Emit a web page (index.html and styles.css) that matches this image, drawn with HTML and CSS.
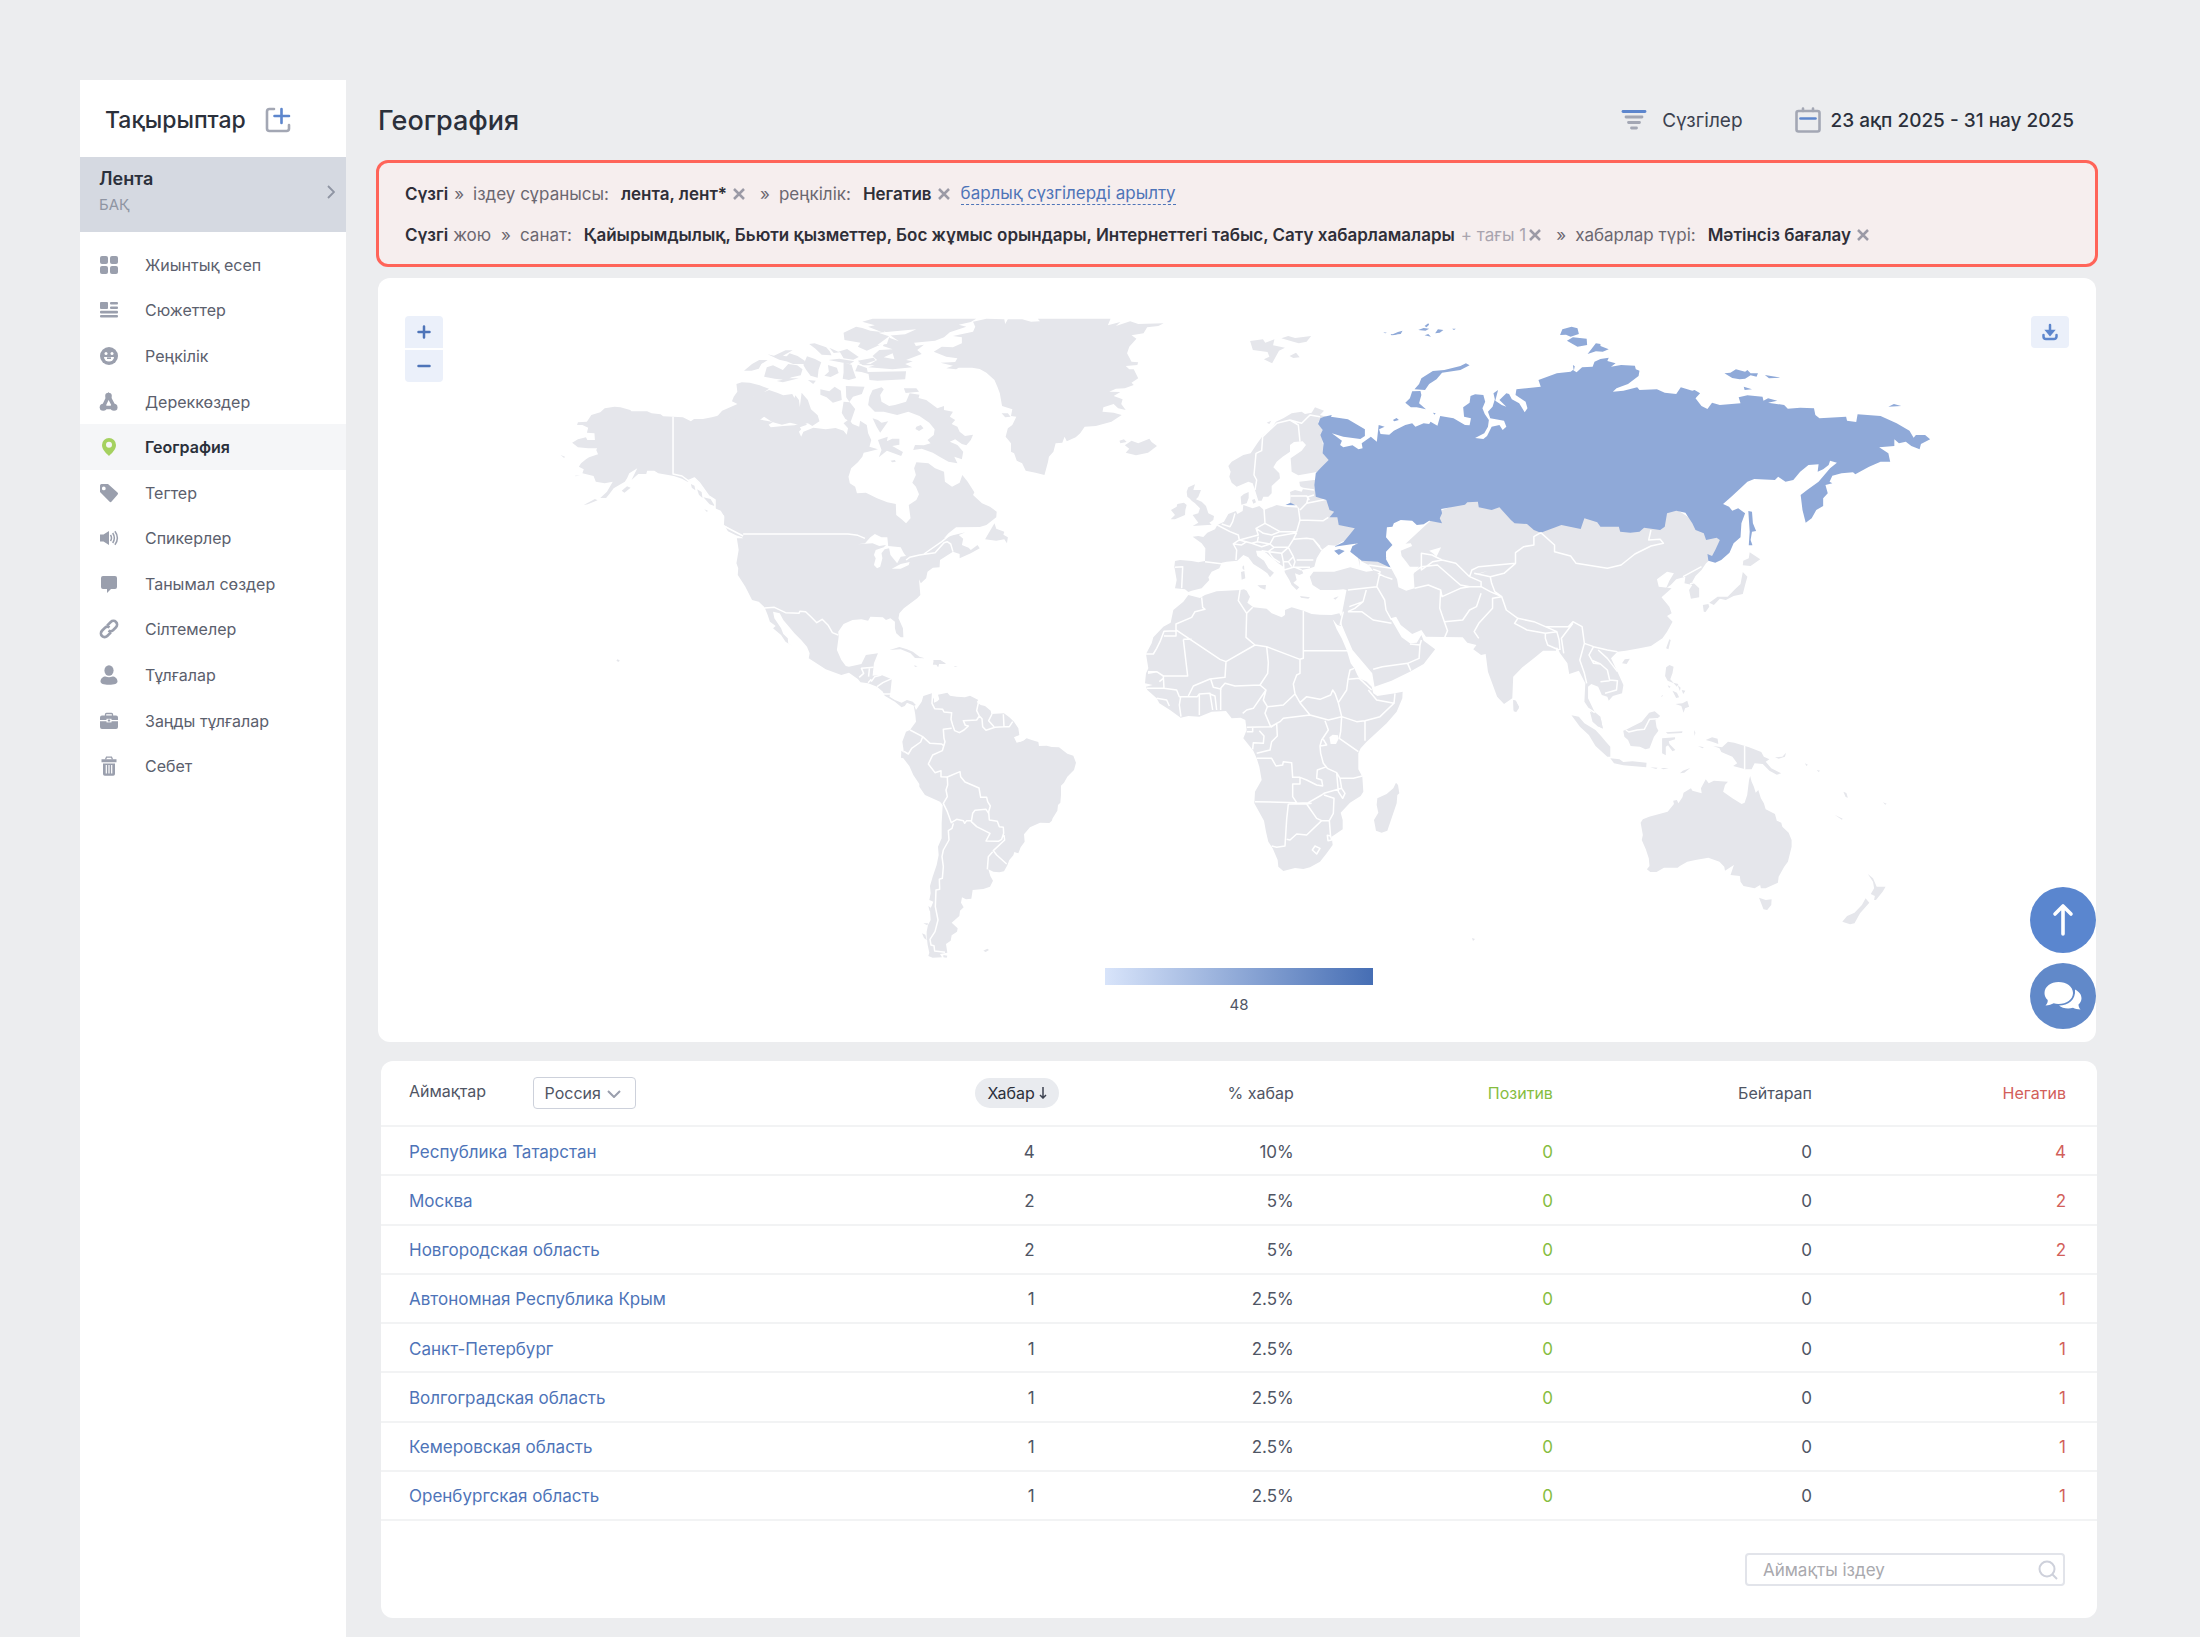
FILE: index.html
```html
<!DOCTYPE html>
<html lang="kk">
<head>
  <meta charset="UTF-8">
  <meta name="viewport" content="width=device-width, initial-scale=1.0">
  <title>География</title>
  <link rel="stylesheet" href="styles.css">
</head>
<body>

  <!-- Sidebar -->
  <aside class="sidebar">
    <div class="sidebar-head">
      <span>Тақырыптар</span>
      <button class="icon-btn" aria-label="Қосу">
        <svg width="26" height="26" viewBox="0 0 26 26" fill="none" stroke-width="2.6" stroke-linecap="round">
          <path stroke="#a3a7b4" d="M9 2H4.500a2.500 2.500 0 0 0-2.500 2.500v17a2.500 2.500 0 0 0 2.500 2.500h17a2.500 2.500 0 0 0 2.500-2.500V18"/>
          <path stroke="#5d86cd" d="M16.500 2v14M9.500 9h14.500"/>
        </svg>
      </button>
    </div>

    <a class="topic" href="#">
      <span>
        <strong>Лента</strong>
        <small>БАҚ</small>
      </span>
      <svg width="8" height="14" viewBox="0 0 8 14" fill="none" stroke="#8f95a3" stroke-width="1.8"><path d="M1 1l6 6-6 6"/></svg>
    </a>

    <nav class="menu">
      <a href="#"><svg viewBox="0 0 20 20"><rect x="1" y="1" width="8" height="8" rx="2"/><rect x="11" y="1" width="8" height="8" rx="2"/><rect x="1" y="11" width="8" height="8" rx="2"/><rect x="11" y="11" width="8" height="8" rx="2"/></svg>Жиынтық есеп</a>
      <a href="#"><svg viewBox="0 0 20 20"><rect x="1" y="2" width="8" height="7" rx="1"/><rect x="11" y="2" width="8" height="2.6" rx="1"/><rect x="11" y="6.4" width="8" height="2.6" rx="1"/><rect x="1" y="10.8" width="18" height="2.6" rx="1"/><rect x="1" y="15" width="18" height="2.6" rx="1"/></svg>Сюжеттер</a>
      <a href="#"><svg viewBox="0 0 20 20"><circle cx="10" cy="10" r="9"/><circle cx="7" cy="7.6" r="1.5" fill="#fff"/><circle cx="13" cy="7.6" r="1.5" fill="#fff"/><path fill="#fff" d="M5 11h10a5 4.6 0 0 1-10 0z"/><path d="M8 11.4h4v1.6H8z"/></svg>Реңкілік</a>
      <a href="#"><svg viewBox="0 0 20 20"><path stroke="#9a9fad" stroke-width="3.600" fill="none" d="M9.500 4L4 15.500h11.500z"/><circle cx="9.500" cy="4" r="3.300"/><circle cx="4.200" cy="15.300" r="3.500"/><circle cx="15" cy="15.300" r="3.500"/></svg>Дереккөздер</a>
      <a href="#" class="active"><svg viewBox="0 0 20 20"><path fill-rule="evenodd" d="M10 1a7 7 0 0 1 7 7c0 4.500-4 8-7 11-3-3-7-6.500-7-11a7 7 0 0 1 7-7zm0 3.800a3 3 0 1 0 0 6 3 3 0 0 0 0-6z"/></svg>География</a>
      <a href="#"><svg viewBox="0 0 20 20"><path fill-rule="evenodd" d="M2.500 1H9l9.500 8.500a1.500 1.500 0 0 1 0 2.200L12.600 18.600a1.500 1.500 0 0 1-2.200 0L1 9V2.500A1.500 1.500 0 0 1 2.500 1zm2.300 2.500a1.900 1.900 0 1 0 0 3.800 1.900 1.900 0 0 0 0-3.800z"/></svg>Тегтер</a>
      <a href="#"><svg viewBox="0 0 20 20"><path d="M1 6.500h3.500L10 3v14l-5.500-3.500H1z"/><g fill="none" stroke="#9a9fad" stroke-width="1.500"><path d="M11.500 7q2 3 0 6M13.700 5q3.300 5 0 10M15.900 3.300q5 6.700 0 13.400"/></g></svg>Спикерлер</a>
      <a href="#"><svg viewBox="0 0 20 20"><path d="M4 2h12a2 2 0 0 1 2 2v9a2 2 0 0 1-2 2h-4l-4 4v-4H4a2 2 0 0 1-2-2V4a2 2 0 0 1 2-2z"/></svg>Танымал сөздер</a>
      <a href="#"><svg viewBox="0 0 20 20"><g fill="none" stroke="#9a9fad" stroke-width="2.600" transform="rotate(-45 10 10)"><path d="M11 6.300h5.200a3.700 3.700 0 0 1 0 7.400H12a3.700 3.700 0 0 1-3.500-3"/><path d="M9 13.700H3.800a3.700 3.700 0 0 1 0-7.400H8a3.700 3.700 0 0 1 3.500 3"/></g></svg>Сілтемелер</a>
      <a href="#"><svg viewBox="0 0 20 20"><ellipse cx="10" cy="5.500" rx="4.600" ry="5.200"/><path d="M1.500 16.500c0-3 2.500-5 5-5 2 1 5 1 7 0 2.500 0 5 2 5 5 0 2-3 3.300-8.500 3.300s-8.500-1.300-8.500-3.300z"/></svg>Тұлғалар</a>
      <a href="#"><svg viewBox="0 0 20 20"><path fill="none" stroke="#9a9fad" stroke-width="1.300" d="M6.500 5V3.500a1 1 0 0 1 1-1h5a1 1 0 0 1 1 1V5"/><path d="M3 4.500h14a2 2 0 0 1 2 2V9H1V6.500a2 2 0 0 1 2-2zM1 10.200h18V16a2 2 0 0 1-2 2H3a2 2 0 0 1-2-2z"/><rect x="7.500" y="7.800" width="5" height="3.600" fill="#fff"/><rect x="8.800" y="8.500" width="2.400" height="2"/></svg>Заңды тұлғалар</a>
      <a href="#"><svg viewBox="0 0 20 20"><path fill="none" stroke="#9a9fad" stroke-width="1.300" d="M6.500 3.500l1-2.300h5l1 2.300"/><path d="M2.500 3.200h15v3h-15zM4 7.400h12V18a1.800 1.800 0 0 1-1.800 1.800H5.800A1.800 1.800 0 0 1 4 18z"/><path stroke="#fff" stroke-width="1.200" d="M7.300 9v8.500M10 9v8.500M12.700 9v8.500"/></svg>Себет</a>
    </nav>
  </aside>

  <!-- Main column -->
  <main class="content">
    <header class="page-head">
      <h1>География</h1>
      <button class="head-btn">
        <svg width="26" height="22" viewBox="0 0 26 22" fill="none" stroke="#a3a7b4" stroke-width="2.800" stroke-linecap="round">
          <path stroke="#5d86cd" d="M2 2.500h22"/><path d="M5 8h16M7.500 13.500h11M10.500 19h5"/>
        </svg>
        Сүзгілер
      </button>
      <button class="head-btn date">
        <svg width="26" height="26" viewBox="0 0 26 26" fill="none" stroke="#a3a7b4" stroke-width="2.600" stroke-linecap="round">
          <rect x="1.500" y="4" width="23" height="20.500" rx="2"/><path d="M8 1.500V4M18 1.500V4"/><path stroke="#5d86cd" d="M5.500 11.500h15"/>
        </svg>
        23 ақп 2025 - 31 нау 2025
      </button>
    </header>

    <!-- Active filters -->
    <section class="filters">
      <div class="filter-row">
        <b>Сүзгі</b>
        <i>»</i><span>іздеу сұранысы:</span><b class="value">лента, лент*</b>
        <button aria-label="Жою"><svg viewBox="0 0 12 12"><path d="M1 1l10 10M11 1L1 11"/></svg></button>
        <i class="sep">»</i><span>реңкілік:</span><b class="value">Негатив</b>
        <button aria-label="Жою"><svg viewBox="0 0 12 12"><path d="M1 1l10 10M11 1L1 11"/></svg></button>
        <a href="#">барлық сүзгілерді арылту</a>
      </div>
      <div class="filter-row">
        <b>Сүзгі</b><span class="drop">жою</span>
        <i>»</i><span>санат:</span><b class="value">Қайырымдылық, Бьюти қызметтер, Бос жұмыс орындары, Интернеттегі табыс, Сату хабарламалары</b><em>+ тағы 1</em>
        <button aria-label="Жою"><svg viewBox="0 0 12 12"><path d="M1 1l10 10M11 1L1 11"/></svg></button>
        <i class="sep">»</i><span>хабарлар түрі:</span><b class="value">Мәтінсіз бағалау</b>
        <button aria-label="Жою"><svg viewBox="0 0 12 12"><path d="M1 1l10 10M11 1L1 11"/></svg></button>
      </div>
    </section>

    <!-- World map -->
    <section class="map-card">
      <svg class="map" viewBox="378 278 1718 764" role="img" aria-label="Әлем картасы">
        <!-- North America, Greenland, Iceland -->
        <g transform="translate(540 300) scale(.44643 .33333)">
          <path class="land" d="M167 320L180 322 202 330 205 334 240 334 250 340 270 343 276 349 298 350 320 352 338 364 345 357 365 357 385 352 416 341 425 352 432 344 455 350 475 348 490 358 522 366 512 374 517 382 545 378 570 376 580 371 590 364 598 374 582 382 585 388 580 395 585 410 590 395 600 390 612 383 640 388 662 384 680 392 687 404 690 385 680 370 692 358 700 372 715 380 717 362 732 375 735 400 742 420 738 440 757 448 735 455 725 458 722 470 712 487 697 505 691 530 694 550 706 560 710 580 730 578 755 595 778 607 797 612 798 645 810 658 820 670 830 655 826 615 843 600 849 583 842 560 834 548 842 525 838 505 843 487 870 490 885 505 905 515 907 545 923 560 940 548 946 525 958 545 973 577 970 585 990 610 1008 620 1023 635 1022 652 1000 675 985 681 932 682 915 700 905 715 925 706 953 697 938 705 948 716 945 735 960 743 965 750 980 735 985 745 965 760 940 775 940 762 925 755 896 780 895 802 880 803 868 815 865 835 853 850 849 838 852 885 845 895 815 925 805 940 803 955 813 985 814 1012 808 1012 798 1000 795 985 795 965 785 955 775 960 768 952 740 950 735 962 720 958 700 960 680 972 668 995 669 1010 665 1050 675 1080 685 1098 692 1100 720 1092 730 1065 757 1060 748 1090 745 1127 765 1125 788 1138 785 1175 783 1190 795 1200 810 1208 822 1200 835 1205 842 1215 838 1217 822 1208 817 1218 810 1222 795 1205 772 1187 768 1175 755 1160 735 1150 718 1147 712 1137 692 1118 675 1125 640 1108 602 1075 604 1060 598 1040 585 1020 570 1000 545 960 537 940 522 935 525 955 540 985 545 1002 555 1015 556 1030 565 1038 550 1025 540 1005 522 985 528 978 515 965 510 945 503 922 490 905 475 900 460 860 455 850 443 825 444 805 440 790 445 750 441 715 455 715 440 698 420 682 412 675 413 650 405 632 392 625 391 600 375 585 360 555 345 535 330 545 318 536 300 528 265 520 256 512 240 512 238 522 220 522 205 540 218 505 200 520 195 535 190 545 165 565 155 583 148 594 135 594 150 575 163 545 145 550 125 545 120 528 95 520 98 508 87 500 92 490 103 478 110 472 130 463 126 450 128 445 108 445 85 442 72 428 85 418 103 412 106 420 123 420 122 400 105 398 108 383 95 375 83 375 85 367 105 365 115 345 135 337 145 325z"/>
          <path class="land" d="M98 615l25-18 6 4-22 12zM183 572l12-13 8 4-14 15zM46 465l10 5-2 4zM78 527l12-1-10 3zM78 632l4-4M338 552l8 5 2 14-8-8zM352 568l10 8 2 18-8-10zM366 592l16 5 10 22-12-6zM368 628l8 4-2 4zM415 680l22 10 16 22-14-6-18-12zM174 1078l5 4-4 4-4-5z"/>
          <!-- arctic islands -->
          <path class="land" d="M440 252l12-5 18 1 22 8 21 10-15 14-22 12-8 18-20 6-18-12 4-14 8-15zM513 270l18 8 14 8 20-4 5 12 2 -8 8 14 2 22 4 -44 14 22 7 28 15 18 4 18-16 14-10-8-20 4-20-6-18 6-22-8-18-16-12 12-50-4-30-10-14 2 12-18 14-8zM457 212l18-20 16-12 19 0-14 12-6 14-16 6zM502 230l6-28 14-6 22 14 12-18 20 4 12 12-4 18-20 6-14 8-24-4zM530 243l30-8 20 0-36 12zM510 163l14 4 26-16 16 0-22 16 18 4-6 14-20-6zM545 180l14-20 18 8 16 14 0 10-26 0zM603 132l12-2 26 12 8 12 4 12-22-2-14-18zM590 195l8-26 18 8 14 10-6 22-2 24-16-6-10-18zM645 195l20 8 4 16-18 12-14-4 10-12zM628 268l20 6 12-14 14 12 2 28-20 8-14-16-14-8zM600 240l18 2-6 10zM648 143l20 12 20-8 26 24-12 8-22-4-8-18-14 2zM680 188l18 6 4 18 6 22-16 6-14-4 2-18zM646 180l24-4 34 8-10 8zM685 258l42 2-6 22-20 8-8 16-7-14zM680 305l14 2 12 20-10 38-12-8-8-18zM712 194l20 10 2 12 86-2-2 24-62 4-18-2-2-18-16-6-14 -2z"/>
          <path class="land" d="M722 65L745 56H977L965 66 938 74 955 80 918 97 905 112 885 122 838 128 842 138 860 134 845 150 855 162 820 180 835 184 818 192 834 202 790 208 735 202 750 196 725 196 712 188 740 192 755 180 745 168 760 150 790 148 768 138 772 128 732 152 712 140 718 128 682 120 680 98 708 80 722 84 740 92 765 96 735 80 750 76zM712 182l35-9 5 8-30 14z"/>
          <path class="water" d="M758 98l85-10-25 15-40 4zM770 92l34 32-20-10zM755 136l28-28-6 24zM770 172l20-12 4 18z"/>
          <path class="land" d="M738 290L745 270 765 262 770 268 762 285 765 305 782 318 795 315 820 305 828 280 850 284 848 294 865 300 890 325 905 318 905 330 925 335 918 350 930 360 922 372 935 380 940 395 952 408 970 404 965 420 955 436 945 432 930 418 918 425 935 435 948 455 945 478 928 470 935 490 915 485 895 470 880 458 855 446 836 450 840 435 860 436 875 430 868 420 882 405 884 388 872 368 850 348 825 335 800 345 770 335 750 335 735 315zM815 265l28 0 6 10-30 4zM745 355l12 5 8 8 15-4-18 34-8-18zM843 380l10-5 6 10-10 8-8-6zM757 420l22-10-2 14 12-8 16 0 0 18-16 4 24 18-4 12-32-16-18 20 6-22zM785 482l10-2 2 5-8 2zM997 718L1018 670 1022 686 1040 695 1038 704 1048 712 1046 730 1040 718 1022 722z"/>
          <path class="land" d="M783 1050L805 1041 822 1048 835 1055 850 1070 862 1075 840 1074 830 1060 808 1048zM838 1096l8 3-6 2zM882 1080l14 0 14 12-16 0-2 10-4-8-8 0zM928 1098l8 2-7 1zM853 1032l4 3"/>
          <path class="land" d="M970 65L1000 56 1040 58 1042 72 1048 58H1080L1100 65 1120 64 1115 56H1278L1272 76 1300 66 1290 78 1322 64 1340 72 1397 70 1385 78 1360 82 1352 100 1325 106 1336 116 1328 128 1320 140 1315 160 1325 185 1340 187 1338 195 1312 198 1320 208 1330 208 1340 235 1325 248 1330 255 1310 265 1290 266 1275 275 1300 276 1285 288 1305 298 1302 312 1312 330 1295 325 1285 312 1262 322 1260 335 1285 338 1303 345 1280 365 1245 378 1220 380 1210 400 1200 412 1180 424 1175 410 1170 428 1155 430 1150 455 1140 470 1138 485 1130 525 1110 518 1088 512 1080 490 1068 482 1062 460 1055 455 1055 430 1043 410 1048 385 1058 375 1067 350 1055 348 1058 328 1035 318 1030 280 1025 262 1018 240 1000 218 985 207 968 203 938 203 932 208 910 205 925 197 897 188 930 186 935 175 910 170 882 155 900 140 925 142 945 130 945 112 925 108 970 95 975 80zM1034 340l14 0 6 10-12 2z"/>
          <path class="land" d="M1298 422L1308 418 1314 426 1300 430zM1310 436L1325 422 1340 430 1365 416 1370 426 1382 438 1362 458 1335 466 1312 458 1320 446z"/>
          <path class="water" d="M712 733L728 730 740 712 750 702 765 712 778 712 780 738 808 742 815 760 820 768 808 770 800 790 785 765 782 745 772 748 765 760 767 775 762 800 755 805 748 795 752 775 748 765 752 750 770 742 775 735 760 738 745 730zM788 806L808 792 828 786 826 795 808 806z"/>
          <path class="border" d="M298 350V522L318 528 332 542 346 534 358 550 378 588 392 600 392 628 412 650M412 678L455 708M455 702H690L712 706 728 715M820 780L828 772 850 765 885 758 905 728 912 725 920 732 925 755M860 762L900 725 932 690M503 924L525 922 550 938 580 940 582 934 595 935 608 952 620 968 632 958 645 975 655 998 668 1005M715 1132L725 1120 720 1105 747 1102M738 1104L736 1130M742 1145L750 1130 765 1125M755 1160L768 1148 788 1136M768 1182H792M735 1148L742 1138"/>
        </g>
        <!-- South America -->
        <g transform="translate(860 660) scale(.33333)">
          <path class="land" d="M160 130L168 150 185 125 190 108 220 98 216 108 222 118 222 128 232 124 238 118 234 104 262 98 270 107 290 110 315 112 330 107 355 120 350 126 362 135 375 138 392 152 394 162 432 160 448 172 462 185 475 205 478 225 462 232 470 248 488 243 500 235 515 240 535 246 537 258 560 257 575 261 597 262 622 281 640 287 648 308 642 330 622 350 612 368 603 377 603 405 601 428 594 435 592 452 578 475 575 483 568 489 540 488 510 502 492 523 494 545 482 562 475 580 463 576 460 586 448 600 442 616 432 634 418 637 400 635 385 628 391 648 399 662 390 680 370 687 338 690 334 716 318 718 306 712 303 728 311 742 300 752 298 768 275 788 293 805 291 815 275 826 272 842 258 852 262 878 240 882 246 892 218 893 205 888 208 878 203 855 200 830 200 815 204 795 212 780 210 750 220 725 208 720 212 700 210 678 218 650 230 615 236 585 234 560 245 535 245 490 248 435 240 425 195 405 178 380 178 372 160 345 148 318 130 295 123 293 124 272 132 278 127 245 138 215 150 210 168 185 166 165z"/>
          <path class="land" d="M250 885l12 2-2 6-10-1zM370 872l12-6 5 4-10 6zM205 738l8 6-4 10zM190 790l14 0-2 6zM186 820l10 4 4 16-8-6zM220 0l20 0 16 10-22 2 0 8-6-8zM162 16l8 4"/>
          <path class="border" d="M218 98L216 130 224 146 248 148 252 156 275 158 273 178 278 195 284 212 298 218 312 210 325 198 316 196 310 182 350 180 358 168 366 176 368 200 378 211 405 202 432 200 448 200 458 185M275 205L250 208 252 235 255 245 247 272 218 285 205 312 225 338 243 332 243 350 262 351 300 335 302 350 315 366 357 384 362 412 380 412 383 425 391 438 386 455 388 480 412 484 418 500 430 502 431 520 425 538 415 544 378 543 390 520 350 500 334 485 338 460 345 451 378 448 386 460M357 120L350 152 358 168M396 162L386 182 402 200M430 163L432 200M150 210L188 230 210 250 245 252 250 256M188 230L182 246 155 265 145 282 132 274M262 351L263 375 258 390 262 410 250 430 262 455 274 488 290 478 310 482 314 490 320 482 334 482M280 490L276 505 265 512 267 540 250 570 246 590 250 620 247 655 238 658 239 688 228 690 226 740 234 780 225 815 210 838 213 855 222 857 224 873 255 877M432 525L434 540 400 572 410 585 440 612M398 575L385 590 382 628M486 228L492 238 478 244"/>
        </g>
        <!-- Europe and Africa -->
        <g transform="translate(1120 380) scale(.33333)">
          <path class="land" d="M163 560L165 543 180 540 215 543 235 547 255 543 256 505 245 490 218 470 235 468 250 471 262 458 285 448 292 435 312 425 325 402 348 393 352 402 368 393 370 375 398 385 418 378 432 390 470 375 495 380 535 383 530 376 510 370 512 348 510 336 525 330 545 335 550 325 540 318 538 305 582 300 700 300 720 560 700 470 690 478 665 485 648 497 625 495 605 510 590 535 583 560 570 565 545 570 550 580 538 585 525 580 530 600 520 608 538 622 530 630 515 615 508 600 495 578 490 560 475 550 440 520 428 512 408 512 412 528 432 542 445 565 462 578 450 592 442 580 425 568 400 552 385 532 370 525 352 542 320 545 305 548 298 565 275 575 265 592 268 600 245 625 215 632 205 636 195 628 165 625 170 600z"/>
          <path class="land" d="M325 258L335 245 370 225 392 220 412 190 430 165 455 145 468 125 490 115 515 100 545 95 555 102 575 98 585 82 612 92 600 105 620 110 595 125 608 150 608 190 615 215 627 240 600 270 590 276 535 286 515 275 512 235 545 212 558 195 548 184 522 186 510 195 510 215 488 230 470 245 460 262 478 280 480 295 455 318 455 340 445 350 430 350 425 362 415 362 405 330 398 310 385 305 350 320 335 308 328 290 332 275zM440 128l14-6-6 10zM362 350l10-8 14-6 0 18-6 16-16 4zM396 360l8-3 4 10-8 4z"/>
          <path class="land" d="M200 335L205 322 225 313 220 330 243 330 235 350 228 358 245 365 258 378 265 400 282 408 280 420 268 428 275 434 218 438 235 428 225 415 218 405 235 400 240 385 225 370 215 362 208 355 202 350zM153 390L170 380 172 372 192 368 200 375 196 390 195 405 165 418 152 418 165 405zM188 320l4 3"/>
          <path class="land" d="M412 616l26-1-2 14-14-5zM363 576l10-3 3 22-11 4zM367 560l5-4 1 14-5-3zM540 648l30 4-5 4-22-3zM640 655l16-6-10 10z"/>
          <path class="land" d="M205 645L240 654 255 645 290 634 362 630 372 628 380 632 385 642 390 650 382 668 400 682 440 686 455 700 485 712 495 705 495 690 515 682 550 692 575 702 600 704 635 705 658 700 666 715 662 738 652 735 638 718 650 748 665 775 680 810 692 850 703 865 712 885 718 895 740 905 755 920 760 940 772 948 825 940 848 935 847 955 830 995 800 1030 740 1085 722 1105 715 1120 715 1168 727 1190 730 1235 722 1248 690 1268 662 1298 668 1320 668 1348 635 1370 638 1395 620 1420 600 1445 570 1462 550 1467 525 1464 490 1473 475 1460 473 1440 458 1405 445 1385 438 1355 432 1322 403 1270 405 1235 425 1200 418 1160 410 1135 400 1112 370 1075 380 1050 376 1020 362 1013 335 1015 318 993 275 995 238 1010 205 1008 182 1013 150 990 118 970 110 955 82 930 78 920 98 915 75 910 78 880 85 865 78 822 95 790 100 772 130 740 152 728 160 690 190 665z"/>
          <path class="land" d="M772 1255L800 1242 820 1225 828 1208 834 1215 838 1240 832 1245 830 1270 802 1352 785 1358 768 1352 762 1320 775 1298 770 1275zM82 738l4 0M1180 960l8 2 9 22-8 12-8-2z"/>
          <path class="water" d="M628 1072l10-8 16 2 2 10-8 16-16 0z"/>
          <path class="border" d="M245 652L248 682 255 688 225 695 215 712 168 732 168 752 132 754 120 785 110 805 100 822 78 822M132 768L168 768 168 750 300 838 318 845 405 795 378 772 380 700 355 662 360 630M380 700L398 682M190 778L203 888H130L110 875 84 875M190 778L215 778M318 845L315 892 270 897 220 918 205 948M405 795L440 800 540 838 550 835 550 692M550 812H688M440 800L445 848 443 880 420 915 345 918 315 910 302 925 302 990M130 890L132 925 170 930 178 950 232 950 238 942 270 940 278 990M80 925L132 925M84 880L110 875M130 895L118 905M272 897L280 922 305 928M270 942L285 948 290 990M238 945L238 1005M182 950L178 975 183 1010M110 955L140 960 148 978M420 915L438 930 400 985 380 990 368 1000M438 930L430 960 442 980 435 1000 452 1040 380 1042M442 980L490 975 525 942 520 912 530 885 540 880 540 838M525 942L540 968 570 1005 490 1015 480 1025 452 1040M540 968L560 950 600 958 632 945 638 930 645 940 655 968M684 898L718 895 755 930M684 898L680 930 655 968 665 1010 625 1020 570 1005M684 898L690 870 703 865M745 930L770 960 822 970 825 940M822 970L780 1010 735 1022 710 1025 665 1010M735 1022L735 1082M665 1010L662 1055 658 1075 715 1115M615 1022L625 1050 605 1080 600 1098 620 1095 610 1078M600 1098L602 1120 610 1150 622 1165 650 1178 660 1195 700 1195 727 1188M452 1042L470 1030 472 1068 455 1085 450 1110 410 1120M380 1055H398V1042M398 1108L400 1088 430 1090 432 1068 418 1052M410 1135H455L468 1158 488 1155 490 1145 515 1148 518 1192 540 1192 560 1200 590 1215 608 1218 605 1200 590 1195 592 1170 620 1160M540 1192V1212H518V1250L530 1268 405 1265M530 1270L565 1268 605 1245 612 1240 665 1225M505 1272L500 1318 495 1398 470 1402 455 1398M505 1272L560 1272 590 1315 605 1322 560 1365 530 1362 510 1380 500 1378M560 1272L575 1270M605 1322L628 1322 640 1300 642 1255 612 1245M628 1322L632 1372M660 1195L665 1225 675 1240 668 1255 655 1235 650 1178M585 1398L600 1405 590 1422 577 1410zM622 1366L632 1368 635 1380 624 1382z"/>
          <path class="border" d="M405 330L410 300 402 285 408 220 425 212 428 170 470 130 510 120 535 135 540 185M510 120L545 130 570 105 600 110M188 562L185 625M165 562L190 560M255 545L310 552M292 435L330 455 355 465 358 480 340 492 350 510 348 540M305 432L330 440 338 425 345 400M432 385L435 430 408 445 415 465 358 480M435 430L480 455 530 455 540 420 535 383M408 445L430 460 455 465 480 455M358 480L395 490 412 485 415 470M412 485L450 492 462 470 530 458M395 490L425 500 450 492 462 502 505 502 520 478 560 475 580 478 605 510M520 478L530 458M540 420L610 422 625 412M540 390L560 370 565 350 582 345M560 370L620 358M512 348L560 348 568 360M545 325L582 330M530 540L580 540M505 502L520 530 525 545 520 560 545 570M462 502L445 515 485 520 490 545 505 545 520 530M485 520L505 502M425 512L445 515 460 535 480 548M490 545L492 570 520 562 570 562M505 545L515 560M340 492L365 495 380 485M580 478L600 500"/>
        </g>
        <!-- Asia -->
        <g transform="translate(1240 310) scale(.45918 .33333)">
          <path class="land" d="M152 800L160 785 205 785 240 772 275 785 290 782 280 765 262 752 330 740 440 600 520 560 655 640 750 600 930 580 1048 685 1035 735 1015 760 1005 780 992 798 985 815 1000 835 1000 862 982 866 978 840 985 825 968 820 970 800 950 808 938 825 928 835 935 812 945 790 930 785 908 808 912 830 940 835 918 862 935 890 940 910 930 918 942 935 930 965 920 985 895 1008 870 1015 840 1022 822 1025 808 1045 822 1085 835 1125 832 1150 812 1158 803 1172 800 1160 788 1155 780 1130 765 1122 758 1130 758 1165 772 1205 785 1220 790 1255 778 1248 768 1212 750 1175 752 1120 738 1082 717 1092 713 1060 697 1030 690 1010 688 1022 660 1022 640 1045 615 1072 595 1100 593 1165 575 1182 560 1160 540 1085 535 1032 525 1035 508 1018 515 1005 495 998 485 982 405 980 395 960 375 972 350 945 340 920 328 925 345 965 352 982 370 1000 385 998 395 975 400 992 425 1018 400 1062 370 1085 330 1112 293 1130 288 1090 245 1020 228 965 222 945 220 925 232 840 225 838 208 840 175 840 158 825z"/>
          <path class="land" d="M22 93L50 88 55 98 75 88 72 106 98 113 85 122 70 160 52 148 64 140 60 126 28 120zM90 85L105 78 120 84 155 78 145 95 128 100 118 96zM108 138l14-10 8 14-14 2z"/>
          <path class="land" d="M832 1060L838 1048 849 1046 842 1062zM928 1015L935 988 938 990 933 1018zM1008 885L1020 882 1022 890 1014 906 1010 905zM1022 878L1040 860 1062 860 1078 838 1090 822 1095 786 1105 800 1100 825 1095 852 1075 858 1058 870 1045 866 1032 885zM1095 766L1096 752 1108 745 1110 727 1133 748 1112 768zM1140 738l10-5zM595 1170L600 1172 608 1190 600 1205 596 1200z"/>
          <!-- Russia -->
          <path class="country" d="M170 342L175 325 183 320 200 315 198 320 235 328 272 358 272 378 262 387 225 380 200 370 222 392 218 405 225 412 245 406 258 418 267 415 265 400 285 380 298 395 302 345 315 350 303 358 306 372 325 374 335 362 360 345 375 340 382 350 400 340 412 342 415 335 430 347 436 318 465 325 490 345 500 346 503 325 488 320 486 292 500 278 502 258 512 253 530 255 534 275 528 295 533 312 542 330 540 350 532 370 512 384 530 387 538 378 548 350 565 345 572 360 580 350 575 332 545 325 540 305 550 290 555 268 552 250 562 240 556 272 570 285 580 290 565 270 580 250 586 252 592 268 608 280 620 307 626 295 622 275 600 255 602 238 655 230 650 210 690 190 720 185 725 180 733 187 745 172 768 170 772 155 785 147 803 143 800 153 818 160 808 170 830 165 860 167 862 178 870 182 868 198 845 222 820 235 812 245 835 242 865 232 870 240 908 238 925 248 950 252 960 232 985 242 990 240 1002 250 992 265 1005 288 1018 297 1028 278 1045 285 1090 280 1086 262 1105 256 1138 260 1140 272 1150 265 1170 272 1150 278 1185 285 1193 296 1220 293 1250 295 1253 315 1262 325 1320 320 1322 332 1342 336 1345 313 1395 318 1430 340 1458 362 1467 383 1472 375 1492 375 1503 388 1483 402 1480 418 1462 408 1450 395 1435 400 1425 388 1425 408 1392 412 1412 430 1416 455 1395 455 1370 470 1340 493 1335 487 1310 490 1290 497 1284 515 1290 520 1275 525 1280 550 1270 565 1270 588 1255 600 1245 625 1232 638 1225 600 1221 555 1235 540 1260 515 1285 475 1300 458 1285 452 1282 465 1270 478 1258 485 1260 463 1238 465 1220 485 1205 510 1188 515 1172 500 1165 510 1120 507 1105 515 1090 535 1070 560 1052 582 1065 590 1072 602 1085 595 1100 610 1092 640 1090 682 1075 700 1066 728 1048 750 1035 758 1020 752 1018 732 1028 738 1035 720 1045 690 1038 683 1015 690 1010 670 992 660 985 640 970 608 950 602 930 610 925 650 915 660 880 653 870 665 850 668 828 665 825 650 785 650 778 637 750 625 742 657 700 645 655 668 640 660 625 642 598 640 590 630 565 592 548 600 520 592 518 575 495 577 490 584 438 597 440 610 435 625 440 640 412 632 400 643 385 645 375 632 350 630 335 640 332 650 320 652 318 682 332 705 318 725 318 740 330 775 300 755 265 752 240 725 245 708 258 700 205 710 225 697 240 672 250 655 215 645 212 622 195 622 205 605 195 600 188 570 165 560 162 525 165 490 175 475 193 450 180 430 182 400 175 375 180 360z"/>
          <path class="country" d="M380 238L390 222 395 205 420 183 445 180 480 168 492 160 500 166 480 180 440 188 428 208 412 222 403 240zM375 244L393 243 395 255 390 280 405 298 385 292 372 292 360 278 370 265zM333 330l8-6 5 6-10 4zM420 308l6 2-2 4zM697 75L702 58 722 50 735 55 738 72 720 80 710 74zM712 92L725 82 755 86 756 105 735 110zM757 132L775 100 785 102 785 108 803 118 790 125 775 124zM725 165l4 4-2 14zM1055 190L1068 188 1080 178 1100 185 1105 180 1112 190 1128 190 1125 200 1112 196 1100 206 1088 208 1072 204zM1143 195L1177 203 1152 205zM1097 230l18 8-16 2zM1412 290l12-8 16 6zM1107 603L1115 605 1117 640 1124 663 1115 665 1112 690 1116 706 1108 706 1110 665zM312 67l8 1-4 2zM330 74l14-8 10-4-4 10zM328 72l16 2-14 2zM388 60l12-6 12 2-8 6zM402 48l8-8 2 4-6 8zM425 70l6-12 12 2-8 8zM410 72l6 8-14-4zM462 56l8 0-4 4zM99 585L110 578 121 586zM205 722L216 717 228 723 215 735z"/>
          <path class="water" d="M350 702L372 700 375 708 350 722 352 738 362 755 370 770 390 770 384 780 378 792 380 835 362 842 345 832 342 808 332 782 318 748 320 728 330 712zM412 722L438 712 428 740 420 730zM508 795L540 782 525 790z"/>
          <path class="border" d="M655 668L640 680 640 705 618 710 600 728 600 760 520 770 505 780 500 800M655 668L685 705 685 725 720 738 732 760 800 775 830 765 860 732 895 708 922 700 915 688 890 690 895 660M600 760L575 790 545 800 548 820 555 845 570 860 580 900 605 925 640 935 665 950 715 950 725 935 745 950 750 1000 770 1010 800 1020 822 1025M500 800L470 760 440 750 418 735 395 730 395 780 420 755 440 750M380 785L395 770M395 770L430 765 480 825 500 830 525 830 525 815 500 800M510 790L545 800M380 835L410 825 437 840 440 860 480 835 500 830M525 830L545 845 570 860M437 840L435 895 445 935 485 930 500 900 515 890 525 850M545 845L570 860 550 865 550 895 520 940 510 965 520 985M445 935L452 962 445 985M605 925L598 940 625 960 665 970 690 965 665 950M665 970L665 985 670 1005 695 1020M690 965L695 990 697 1020M725 940L700 985 705 1030M750 1000L740 1050 750 1090 755 1120M770 1010L760 1035 770 1060 785 1062 800 1080 805 1110 822 1112 820 1140 795 1150M785 1062L765 1050M785 1115L805 1112M780 1020L800 1045 822 1085M965 800L1005 770M980 822L995 815M298 830L235 840M298 830L315 870 318 900 330 930M298 830L305 785 290 778M315 800L332 808M280 765L330 775M300 790L315 800M275 840L268 875 238 890M268 875L250 895 235 905M235 905L265 905 290 930 330 940M370 1002L392 1005 395 990M392 1005L390 1045 365 1060 310 1070 290 1078M365 1060L372 1082M225 905L218 945"/>
        </g>
        <!-- South-East Asia and Oceania -->
        <g transform="translate(1540 640) scale(.37 .33333)">
          <path class="land" d="M272 548L278 538 295 530 345 515 362 492 360 482 370 480 374 490 385 472 388 458 408 445 412 452 437 460 435 445 448 418 456 430 470 422 508 425 500 435 495 455 520 475 545 492 553 488 560 465 565 420 568 408 572 425 578 440 583 458 590 450 597 475 605 490 610 508 635 522 640 542 652 548 655 560 672 578 680 600 680 620 670 665 660 680 645 710 643 728 610 745 597 745 595 735 580 745 550 738 542 725 540 708 515 705 524 675 500 692 498 680 485 665 455 653 420 660 398 665 378 678 372 683 335 683 315 696 298 696 289 688 296 678 294 655 286 628 275 600 278 585z"/>
          <path class="land" d="M592 773L610 780 626 778 625 795 614 810 604 808zM886 702L900 715 910 740 934 740 926 755 908 780 903 780 905 768 894 762 903 745 900 725zM880 775L890 788 865 820 850 850 838 853 817 845 830 828 850 818 870 795z"/>
          <path class="land" d="M85 226L105 230 120 250 150 270 165 288 178 305 190 320 190 350 182 350 150 318 132 285 108 260zM135 215L150 222 165 240 170 266 155 258 142 245zM190 355L215 358 225 366 250 364 288 368 287 382 225 376 200 370zM298 382l20 1-4 4zM326 384l22 0-14 4zM378 400l8-8 20-8-16 14zM335 393l8 4zM225 272L235 268 275 245 295 218 310 214 325 228 312 240 315 262 320 272 308 290 296 325 285 328 270 320 245 318 238 300 228 290zM340 277L385 274 384 279 345 281zM330 295L365 292 365 298 348 304 350 312 366 330 358 334 346 316 340 320 340 346 330 340zM416 270l4 8-2 10zM427 318l16 4-4 3zM448 300L465 292 480 296 482 312 465 305zM468 318L492 322 508 305 525 308 565 322 598 336 605 350 620 358 610 365 625 385 652 400 640 404 620 392 602 372 580 370 572 388 555 388 522 378 533 370 520 350 490 336 485 325zM635 352L655 350 665 338 662 350 645 356zM716 370l8 4-4 4zM748 390l9 2-4 4zM820 455l8 4 4 14-6-2zM927 487l10 4-4 3zM796 524l22 12-2 3zM341 82L350 75 361 80 358 100 352 118 362 130 345 122 338 108zM360 128l14 4-4 8zM372 135l8 8-2 10zM345 136l8 4-4 4zM358 152l12 6 6 14-8 2zM383 150l10 2-6 10zM366 192L385 190 398 182 403 200 392 205 388 218 382 198zM328 168l5 -4-4 8z"/>
          <path class="border" d="M553 318V388M232 270L240 276 262 270 282 268 296 238 318 236M130 205L148 218"/>
        </g>
        <path class="land" d="M1472 938l3 1-2 2z"/>
      </svg>

      <div class="zoom">
        <button aria-label="Үлкейту"><svg width="14" height="14" viewBox="0 0 14 14"><path d="M7 1.500v11M1.500 7h11"/></svg></button>
        <button aria-label="Кішірейту"><svg width="14" height="14" viewBox="0 0 14 14"><path d="M1.500 7h11"/></svg></button>
      </div>
      <button class="download" aria-label="Жүктеу">
        <svg width="18" height="18" viewBox="0 0 18 18"><path d="M9 2v8M6 8l3 3.500L12 8zM2.500 12v1.500A2.500 2.500 0 0 0 5 16h8a2.500 2.500 0 0 0 2.500-2.500V12"/></svg>
      </button>

      <div class="legend">
        <div class="legend-bar"></div>
        <span>48</span>
      </div>

      <div class="float-btns">
        <button class="up" aria-label="Жоғары">
          <svg width="22" height="34" viewBox="0 0 22 34" fill="none" stroke="#fff" stroke-width="3.600" stroke-linecap="round" stroke-linejoin="round"><path d="M11 31V3M3 11l8-8 8 8"/></svg>
        </button>
        <button class="chat" aria-label="Чат">
          <svg width="38" height="30" viewBox="0 0 38 30" fill="#fff"><path d="M14.500 1C22.500 1 29 5.500 29 12s-6.500 11-14.500 11c-1.800 0-3.300-.3-4.800-.7C7.500 23.500 5 24.500 1.500 24.500 3 23 4 21 3.700 19 1.500 17 .5 14.700.5 12 .5 5.500 7 1 14.500 1z"/><path d="M31 8.500c4 2 6.500 5 6.500 8.800 0 2.500-1.200 4.600-3 6.200 0 2 .8 3.700 2 5-3 0-5.500-.5-7.500-1.700-5 1.500-11 .5-14-2.300C24 24.500 32 19 31 8.500z"/></svg>
        </button>
      </div>
    </section>

    <!-- Regions table -->
    <section class="table-card">
      <table>
        <thead>
          <tr>
            <th class="region">
              <label for="country">Аймақтар</label>
              <span class="select">
                <select id="country"><option>Россия</option></select>
                <svg width="14" height="8" viewBox="0 0 14 8" fill="none" stroke="#9a9fad" stroke-width="2"><path d="M1 1l6 6 6-6"/></svg>
              </span>
            </th>
            <th class="sorted"><button>Хабар <svg width="8" height="12" viewBox="0 0 8 12" fill="none" stroke="#3c4250" stroke-width="1.500"><path d="M4 0v11M1 8l3 3 3-3"/></svg></button></th>
            <th>% хабар</th>
            <th class="pos">Позитив</th>
            <th>Бейтарап</th>
            <th class="neg">Негатив</th>
          </tr>
        </thead>
        <tbody>
          <tr><td><a href="#">Республика Татарстан</a></td><td>4</td><td>10%</td><td class="pos">0</td><td>0</td><td class="neg">4</td></tr>
          <tr><td><a href="#">Москва</a></td><td>2</td><td>5%</td><td class="pos">0</td><td>0</td><td class="neg">2</td></tr>
          <tr><td><a href="#">Новгородская область</a></td><td>2</td><td>5%</td><td class="pos">0</td><td>0</td><td class="neg">2</td></tr>
          <tr><td><a href="#">Автономная Республика Крым</a></td><td>1</td><td>2.5%</td><td class="pos">0</td><td>0</td><td class="neg">1</td></tr>
          <tr><td><a href="#">Санкт-Петербург</a></td><td>1</td><td>2.5%</td><td class="pos">0</td><td>0</td><td class="neg">1</td></tr>
          <tr><td><a href="#">Волгоградская область</a></td><td>1</td><td>2.5%</td><td class="pos">0</td><td>0</td><td class="neg">1</td></tr>
          <tr><td><a href="#">Кемеровская область</a></td><td>1</td><td>2.5%</td><td class="pos">0</td><td>0</td><td class="neg">1</td></tr>
          <tr><td><a href="#">Оренбургская область</a></td><td>1</td><td>2.5%</td><td class="pos">0</td><td>0</td><td class="neg">1</td></tr>
        </tbody>
      </table>
      <div class="table-foot">
        <label class="search">
          <input type="text" placeholder="Аймақты іздеу" aria-label="Аймақты іздеу">
          <svg width="20" height="20" viewBox="0 0 20 20" fill="none" stroke="#ced1db" stroke-width="2"><circle cx="9" cy="9" r="7.500"/><path d="M14.500 14.500L19 19"/></svg>
        </label>
      </div>
    </section>
  </main>

</body>
</html>
```
FILE: styles.css
```css
* {
  box-sizing: border-box;
  margin: 0;
  padding: 0;
}

body {
  display: flex;
  gap: 30px;
  min-height: 100vh;
  padding: 80px 102px 0 80px;
  font-family: Inter, "Liberation Sans", sans-serif;
  font-size: 17px;
  color: #4f5564;
  background: #ecedef;
}

button {
  font: inherit;
  color: inherit;
  border: none;
  background: none;
  cursor: pointer;
}

a {
  color: #4e74b8;
  text-decoration: none;
}

svg {
  display: block;
  flex: none;
}

/* Sidebar */
.sidebar {
  flex: none;
  width: 266px;
  background: #fff;
}

.sidebar-head {
  display: flex;
  align-items: center;
  gap: 19px;
  height: 77px;
  padding: 3px 25px 0;
  font-size: 23px;
  font-weight: 500;
  color: #2b303b;
}

.topic {
  display: flex;
  align-items: center;
  justify-content: space-between;
  height: 75px;
  padding: 0 11px 6px 19px;
  background: #d5d9e1;
}

.topic strong,
.topic small {
  display: block;
  line-height: 26px;
}

.topic strong {
  font-size: 18px;
  font-weight: 600;
  color: #2b303b;
}

.topic small {
  font-size: 15px;
  color: #8f95a3;
}

.menu {
  display: grid;
  grid-auto-rows: 1fr;
  height: 547px;
  margin-top: 10px;
}

.menu a {
  display: flex;
  align-items: center;
  gap: 26px;
  padding-left: 19px;
  font-size: 16px;
  color: #5b606d;
}

.menu svg {
  width: 20px;
  height: 20px;
  fill: #9a9fad;
}

.menu .active {
  font-weight: 600;
  color: #2b303b;
  background: #f5f6f8;
}

.menu .active svg {
  fill: #a5d160;
}

/* Page header */
.content {
  flex: 1;
  min-width: 0;
  padding-bottom: 18px;
}

.page-head {
  display: flex;
  align-items: center;
  gap: 52px;
  height: 80px;
  padding: 0 24px 0 2px;
}

.page-head h1 {
  margin-right: auto;
  font-size: 27px;
  font-weight: 500;
  color: #2b303b;
}

.head-btn {
  display: flex;
  align-items: center;
  gap: 15px;
  font-size: 19px;
  color: #3c4250;
}

.date {
  gap: 10px;
  font-weight: 500;
  color: #2b303b;
}

/* Filters */
.filters {
  padding: 10px 26px 9px;
  border: 3px solid #ff6459;
  border-radius: 12px;
  background: #f6eeee;
  color: #6b6770;
}

.filter-row {
  display: flex;
  align-items: center;
  height: 41px;
  white-space: nowrap;
}

.filter-row b {
  font-weight: 600;
  color: #2f2f38;
}

.filter-row i {
  margin: 0 9px 0 6px;
  font-style: normal;
}

.filter-row .sep {
  margin-left: 15px;
}

.filter-row .drop {
  margin: 0 4px 0 5px;
}

.filter-row .value {
  margin-left: 12px;
}

.filter-row em {
  margin-left: 6px;
  font-style: normal;
  color: #a9a4ae;
}

.filter-row button {
  margin-left: 6px;
}

.filter-row em + button {
  margin-left: 3px;
}

.filter-row button svg {
  width: 12px;
  height: 12px;
  fill: none;
  stroke: #9b9aa6;
  stroke-width: 2.5px;
}

.filter-row a {
  margin-left: 11px;
  line-height: 22px;
  border-bottom: 1px dashed #4e74b8;
}

/* Map */
.map-card {
  position: relative;
  margin: 11px 2px 0;
  border-radius: 12px;
  background: #fff;
}

.map {
  width: 100%;
  height: auto;
}

.land {
  fill: #e5e6eb;
}

.country {
  fill: #8fa9d8;
}

.water {
  fill: #fff;
}

.border {
  fill: none;
  stroke: #fff;
  stroke-width: 1.5px;
  stroke-linejoin: round;
  vector-effect: non-scaling-stroke;
}

.zoom {
  position: absolute;
  top: 38px;
  left: 27px;
  display: grid;
  gap: 2px;
}

.zoom button,
.download {
  display: grid;
  place-items: center;
  width: 38px;
  height: 32px;
  background: #ebf0fa;
}

.zoom button:first-child {
  border-radius: 4px 4px 0 0;
}

.zoom button:last-child {
  border-radius: 0 0 4px 4px;
}

.zoom svg,
.download svg {
  fill: none;
  stroke: #4e74b8;
  stroke-width: 2.5px;
  stroke-linecap: round;
}

.download {
  position: absolute;
  top: 38px;
  right: 27px;
  border-radius: 4px;
}

.download svg {
  stroke: #5d86cd;
}

.legend {
  position: absolute;
  bottom: 27px;
  left: 50%;
  width: 268px;
  margin-left: -132px;
  font-size: 15px;
  line-height: 20px;
  text-align: center;
}

.legend-bar {
  height: 17px;
  margin-bottom: 10px;
  background: linear-gradient(to right, #d8e4fa, #466eb4);
}

.float-btns {
  position: absolute;
  right: 0;
  bottom: 13px;
  display: grid;
  gap: 10px;
}

.float-btns button {
  display: grid;
  place-items: center;
  width: 66px;
  height: 66px;
  border-radius: 50%;
}

.up {
  background: #5a86cf;
}

.chat {
  background: #6189c9;
}

/* Table */
.table-card {
  margin: 19px 1px 0 5px;
  border-radius: 12px;
  background: #fff;
}

table {
  width: 100%;
  height: 460px;
  border-collapse: collapse;
  table-layout: fixed;
}

th,
td {
  width: 15.1%;
  padding-right: 31px;
  border-bottom: 2px solid #f2f3f4;
  text-align: right;
}

th {
  height: 65px;
  font-size: 16px;
  font-weight: 400;
}

td {
  padding-top: 2px;
}

th:first-child,
td:first-child {
  width: 24.8%;
  padding-left: 28px;
  padding-right: 0;
  text-align: left;
}

th:last-child {
  width: 14.8%;
}

.region label {
  margin-right: 42px;
}

.select {
  position: relative;
  display: inline-block;
  vertical-align: middle;
}

.select select {
  width: 103px;
  height: 32px;
  padding-left: 11px;
  font: inherit;
  color: #4f5564;
  border: 1px solid #cdd1db;
  border-radius: 4px;
  background: #fff;
  appearance: none;
}

.select svg {
  position: absolute;
  top: 13px;
  right: 15px;
  pointer-events: none;
}

.sorted {
  padding-right: 7px;
}

.sorted button {
  display: inline-flex;
  align-items: center;
  gap: 4px;
  height: 30px;
  padding: 0 12px;
  border-radius: 15px;
  color: #2b303b;
  background: #e9ebef;
}

.pos {
  color: #86bd3f;
}

.neg {
  color: #d2605a;
}

.table-foot {
  display: flex;
  justify-content: flex-end;
  padding: 32px;
}

.search {
  display: flex;
  align-items: center;
  width: 320px;
  height: 33px;
  padding: 0 5px 0 16px;
  border: 2px solid #e2e4ea;
  border-radius: 4px;
}

.search input {
  flex: 1;
  min-width: 0;
  font: inherit;
  color: inherit;
  border: none;
  outline: none;
}

.search input::placeholder {
  color: #a9a9ae;
}
```
